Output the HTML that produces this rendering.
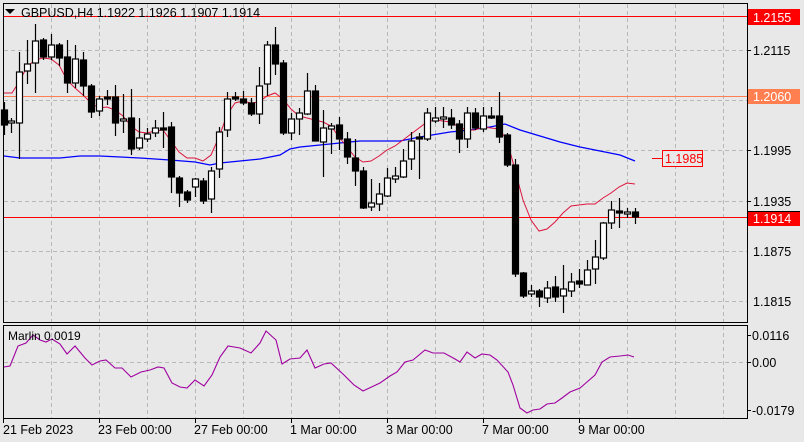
<!DOCTYPE html>
<html><head><meta charset="utf-8"><style>
html,body{margin:0;padding:0;background:#e8e8e8;}
svg{display:block;font-family:"Liberation Sans",sans-serif;}
</style></head><body>
<svg width="804" height="442" viewBox="0 0 804 442" xmlns="http://www.w3.org/2000/svg">
<rect width="804" height="442" fill="#e8e8e8"/>
<g stroke="#b8b8b8" stroke-dasharray="4,3" stroke-width="1">
<path d="M51.5 4V322M99.5 4V322M147.5 4V322M195.5 4V322M243.5 4V322M291.5 4V322M339.5 4V322M387.5 4V322M435.5 4V322M483.5 4V322M531.5 4V322M579.5 4V322M627.5 4V322M675.5 4V322M723.5 4V322"/>
<path d="M4 50.5H747M4 100.5H747M4 150.5H747M4 201.5H747M4 251.5H747M4 301.5H747"/>
<path d="M51.5 326V418M99.5 326V418M147.5 326V418M195.5 326V418M243.5 326V418M291.5 326V418M339.5 326V418M387.5 326V418M435.5 326V418M483.5 326V418M531.5 326V418M579.5 326V418M627.5 326V418M675.5 326V418M723.5 326V418"/>
<path d="M4 362.5H747"/>
</g>
<line x1="4" y1="16.5" x2="747" y2="16.5" stroke="#ff0000"/>
<line x1="4" y1="96.5" x2="747" y2="96.5" stroke="#ff7f50"/>
<line x1="4" y1="217.5" x2="747" y2="217.5" stroke="#ff0000"/>
<polyline fill="none" stroke="#0000ff" stroke-width="1.3" points="4,156 20,158 60,158 80,156 100,156 140,158 170,160 195,162 210,165 220,163 240,161 260,159 280,155 290,149 300,147 310,146 330,144 360,141 400,141 420,137 450,132 470,130 490,127 505,124 520,130 540,136 560,142 580,147 600,151 620,155 635,161"/>
<polyline fill="none" stroke="#dc143c" stroke-width="1" points="4,93 12,93 19,82 27,67 35,60 43,58 51,59 59,65 67,80 75,88 83,95 91,103 99,108 107,107 115,110 123,116 131,126 139,132 147,133 155,131 163,130 171,141 179,152 187,158 195,158 203,161 211,155 219,137 227,115 235,103 243,101 251,103 259,102 267,96 275,93 283,99 291,109 299,116 307,118 315,120 323,122 331,126 339,137 347,147 355,157 363,162 371,161 379,156 387,150 395,146 403,140 411,134 419,128 427,122 435,120 443,121 451,122 459,127 467,130 475,130 483,127 491,128 499,129 507,140 515,170 523,200 531,220 539,231 547,229 555,222 563,213 571,206 579,205 587,204 595,204 603,198 611,193 619,187 627,183 635,184"/>
<g id="c" stroke="#000" stroke-width="1.2">
<path d="M4.5 102V135M11.5 118V133M19.5 52V159M27.5 40V84M35.5 24V93M43.5 38V60M51.5 34V60M59.5 43V66M67.5 40V93M75.5 45V88M83.5 52V96M91.5 84V118M99.5 96V116M107.5 90V105M115.5 85V136M123.5 94V133M131.5 89V155M139.5 118V150M147.5 128V142M155.5 120V137M163.5 112V148M171.5 122V193M179.5 176V207M187.5 190V203M195.5 178V197M203.5 178V204M211.5 167V213M219.5 127V178M227.5 92V137M235.5 92V101M243.5 91V105M251.5 98V116M259.5 67V124M267.5 41V96M275.5 27V75M283.5 60V135M291.5 113V140M299.5 108V135M307.5 73V115M315.5 85V141M323.5 110V177M331.5 123V154M339.5 117V150M347.5 132V164M355.5 139V186M363.5 167V209M371.5 179V211M379.5 183V211M387.5 168V197M395.5 167V183M403.5 149V178M411.5 132V170M419.5 133V179M427.5 108V141M435.5 107V123M443.5 107V128M451.5 109V129M459.5 120V153M467.5 107V148M475.5 108V130M483.5 107V132M491.5 107V119M499.5 92V143M507.5 133V167M515.5 159V277M523.5 272V298M531.5 285V297M539.5 289V307M547.5 281V303M555.5 276V302M563.5 265V313M571.5 273V297M579.5 269V288M587.5 260V285M595.5 240V284M603.5 222V260M611.5 201V229M619.5 198V228M627.5 208V218M635.5 208V224"/>
</g>
<g stroke="#000" stroke-width="1.2" fill="#000">
<rect x="1.5" y="110" width="6" height="15"/><rect x="40.5" y="40" width="6" height="17"/><rect x="56.5" y="45" width="6" height="13"/><rect x="64.5" y="57" width="6" height="26"/><rect x="80.5" y="60" width="6" height="26"/><rect x="88.5" y="86" width="6" height="26"/><rect x="104.5" y="97" width="6" height="2"/><rect x="112.5" y="97" width="6" height="26"/><rect x="128.5" y="118" width="6" height="31"/><rect x="160.5" y="128" width="6" height="2"/><rect x="168.5" y="127" width="6" height="50"/><rect x="176.5" y="178" width="6" height="15"/><rect x="184.5" y="192" width="6" height="8"/><rect x="200.5" y="181" width="6" height="20"/><rect x="232.5" y="97" width="6" height="2"/><rect x="240.5" y="99" width="6" height="4"/><rect x="248.5" y="103" width="6" height="11"/><rect x="272.5" y="45" width="6" height="19"/><rect x="280.5" y="63" width="6" height="70"/><rect x="312.5" y="91" width="6" height="50"/><rect x="336.5" y="125" width="6" height="14"/><rect x="344.5" y="139" width="6" height="18"/><rect x="352.5" y="158" width="6" height="13"/><rect x="360.5" y="171" width="6" height="37"/><rect x="416.5" y="137" width="6" height="2"/><rect x="448.5" y="118" width="6" height="7"/><rect x="456.5" y="124" width="6" height="15"/><rect x="472.5" y="113" width="6" height="15"/><rect x="488.5" y="116" width="6" height="2"/><rect x="496.5" y="116" width="6" height="21"/><rect x="504.5" y="135" width="6" height="30"/><rect x="512.5" y="165" width="6" height="109"/><rect x="520.5" y="273" width="6" height="23"/><rect x="536.5" y="291" width="6" height="6"/><rect x="552.5" y="287" width="6" height="10"/><rect x="576.5" y="281" width="6" height="3"/><rect x="616.5" y="211" width="6" height="2"/><rect x="632.5" y="212" width="6" height="5"/>
</g>
<g stroke="#000" stroke-width="1.2" fill="#fff">
<rect x="8.5" y="121" width="6" height="2"/><rect x="16.5" y="72" width="6" height="51"/><rect x="24.5" y="64" width="6" height="7"/><rect x="32.5" y="41" width="6" height="22"/><rect x="48.5" y="45" width="6" height="12"/><rect x="72.5" y="59" width="6" height="24"/><rect x="96.5" y="99" width="6" height="12"/><rect x="120.5" y="119" width="6" height="2"/><rect x="136.5" y="138" width="6" height="10"/><rect x="144.5" y="134" width="6" height="5"/><rect x="152.5" y="128" width="6" height="5"/><rect x="192.5" y="179" width="6" height="8"/><rect x="208.5" y="171" width="6" height="28"/><rect x="216.5" y="132" width="6" height="37"/><rect x="224.5" y="99" width="6" height="31"/><rect x="256.5" y="86" width="6" height="28"/><rect x="264.5" y="45" width="6" height="39"/><rect x="288.5" y="119" width="6" height="14"/><rect x="296.5" y="113" width="6" height="6"/><rect x="304.5" y="91" width="6" height="23"/><rect x="320.5" y="128" width="6" height="14"/><rect x="328.5" y="126" width="6" height="3"/><rect x="368.5" y="203" width="6" height="4"/><rect x="376.5" y="194" width="6" height="10"/><rect x="384.5" y="178" width="6" height="18"/><rect x="392.5" y="176" width="6" height="3"/><rect x="400.5" y="161" width="6" height="16"/><rect x="408.5" y="141" width="6" height="18"/><rect x="424.5" y="113" width="6" height="26"/><rect x="432.5" y="118" width="6" height="3"/><rect x="440.5" y="117" width="6" height="2"/><rect x="464.5" y="113" width="6" height="26"/><rect x="480.5" y="116" width="6" height="13"/><rect x="528.5" y="291" width="6" height="3"/><rect x="544.5" y="288" width="6" height="10"/><rect x="560.5" y="289" width="6" height="7"/><rect x="568.5" y="282" width="6" height="9"/><rect x="584.5" y="270" width="6" height="15"/><rect x="592.5" y="257" width="6" height="12"/><rect x="600.5" y="223" width="6" height="35"/><rect x="608.5" y="210" width="6" height="13"/><rect x="624.5" y="212" width="6" height="2"/>
</g>
<polyline fill="none" stroke="#a000a0" stroke-width="1.1" points="4,367 10,366 18,346 26,343 33,335 40,340 46,342 52,339 60,344 67,354 75,346 85,358 92,365 100,361 106,360 115,368 122,368 131,377 141,372 150,370 158,367 164,368 172,383 180,387 187,388 195,380 204,386 212,375 220,357 228,346 240,348 251,353 260,343 266,331 276,340 282,364 290,359 300,358 307,350 315,368 324,364 331,363 344,375 354,385 363,391 380,383 390,376 397,372 405,362 413,360 425,350 433,353 444,353 455,359 460,362 467,352 475,358 482,354 490,355 497,360 508,372 513,385 520,408 527,413 533,410 540,409 547,404 555,403 562,398 570,392 580,388 587,382 595,375 602,362 610,357 620,356 628,355 634,357"/>
<rect x="3.5" y="3.5" width="744" height="319" fill="none" stroke="#000"/>
<rect x="3.5" y="325.5" width="744" height="93" fill="none" stroke="#000"/>
<g stroke="#000"><path d="M747 50.5h4M747 150.5h4M747 201.5h4M747 335.5h4M747 362.5h4M747 410.5h4M3.5 419v4M99.5 419v4M195.5 419v4M291.5 419v4M387.5 419v4M483.5 419v4M579.5 419v4"/></g>
<polygon points="5,9 15,9 10,14" fill="#000"/>
<text x="21" y="17" font-size="12.5" fill="#000">GBPUSD,H4  1.1922 1.1926 1.1907 1.1914</text>
<g font-size="12.5" fill="#000">
<text x="753" y="55">1.2115</text>
<text x="753" y="155">1.1995</text>
<text x="753" y="206">1.1935</text>
<text x="753" y="256">1.1875</text>
<text x="753" y="306">1.1815</text>
<text x="752" y="340">0.0116</text>
<text x="752" y="367">0.00</text>
<text x="752" y="415">-0.0179</text>
</g>
<rect x="748" y="9" width="52" height="16" fill="#ff0000"/>
<text x="753" y="22" font-size="12.5" fill="#fff">1.2155</text>
<rect x="748" y="89" width="52" height="15" fill="#ff7f50"/>
<text x="753" y="101" font-size="12.5" fill="#fff">1.2060</text>
<rect x="748" y="211" width="52" height="15" fill="#ff0000"/>
<line x1="748" y1="211.5" x2="800" y2="211.5" stroke="#000"/>
<text x="753" y="223" font-size="12.5" fill="#fff">1.1914</text>
<line x1="652" y1="158.5" x2="662" y2="158.5" stroke="#ff0000"/>
<rect x="662.5" y="150.5" width="40" height="16" fill="#e8e8e8" stroke="#ff0000"/>
<text x="665" y="163" font-size="12.5" fill="#ff0000">1.1985</text>
<text x="8" y="340" font-size="12" fill="#000">Marlin 0.0019</text>
<g font-size="12.5" fill="#000">
<text x="3" y="434">21 Feb 2023</text>
<text x="98" y="434">23 Feb 00:00</text>
<text x="194" y="434">27 Feb 00:00</text>
<text x="290" y="434">1 Mar 00:00</text>
<text x="386" y="434">3 Mar 00:00</text>
<text x="482" y="434">7 Mar 00:00</text>
<text x="578" y="434">9 Mar 00:00</text>
</g>
</svg>
</body></html>
